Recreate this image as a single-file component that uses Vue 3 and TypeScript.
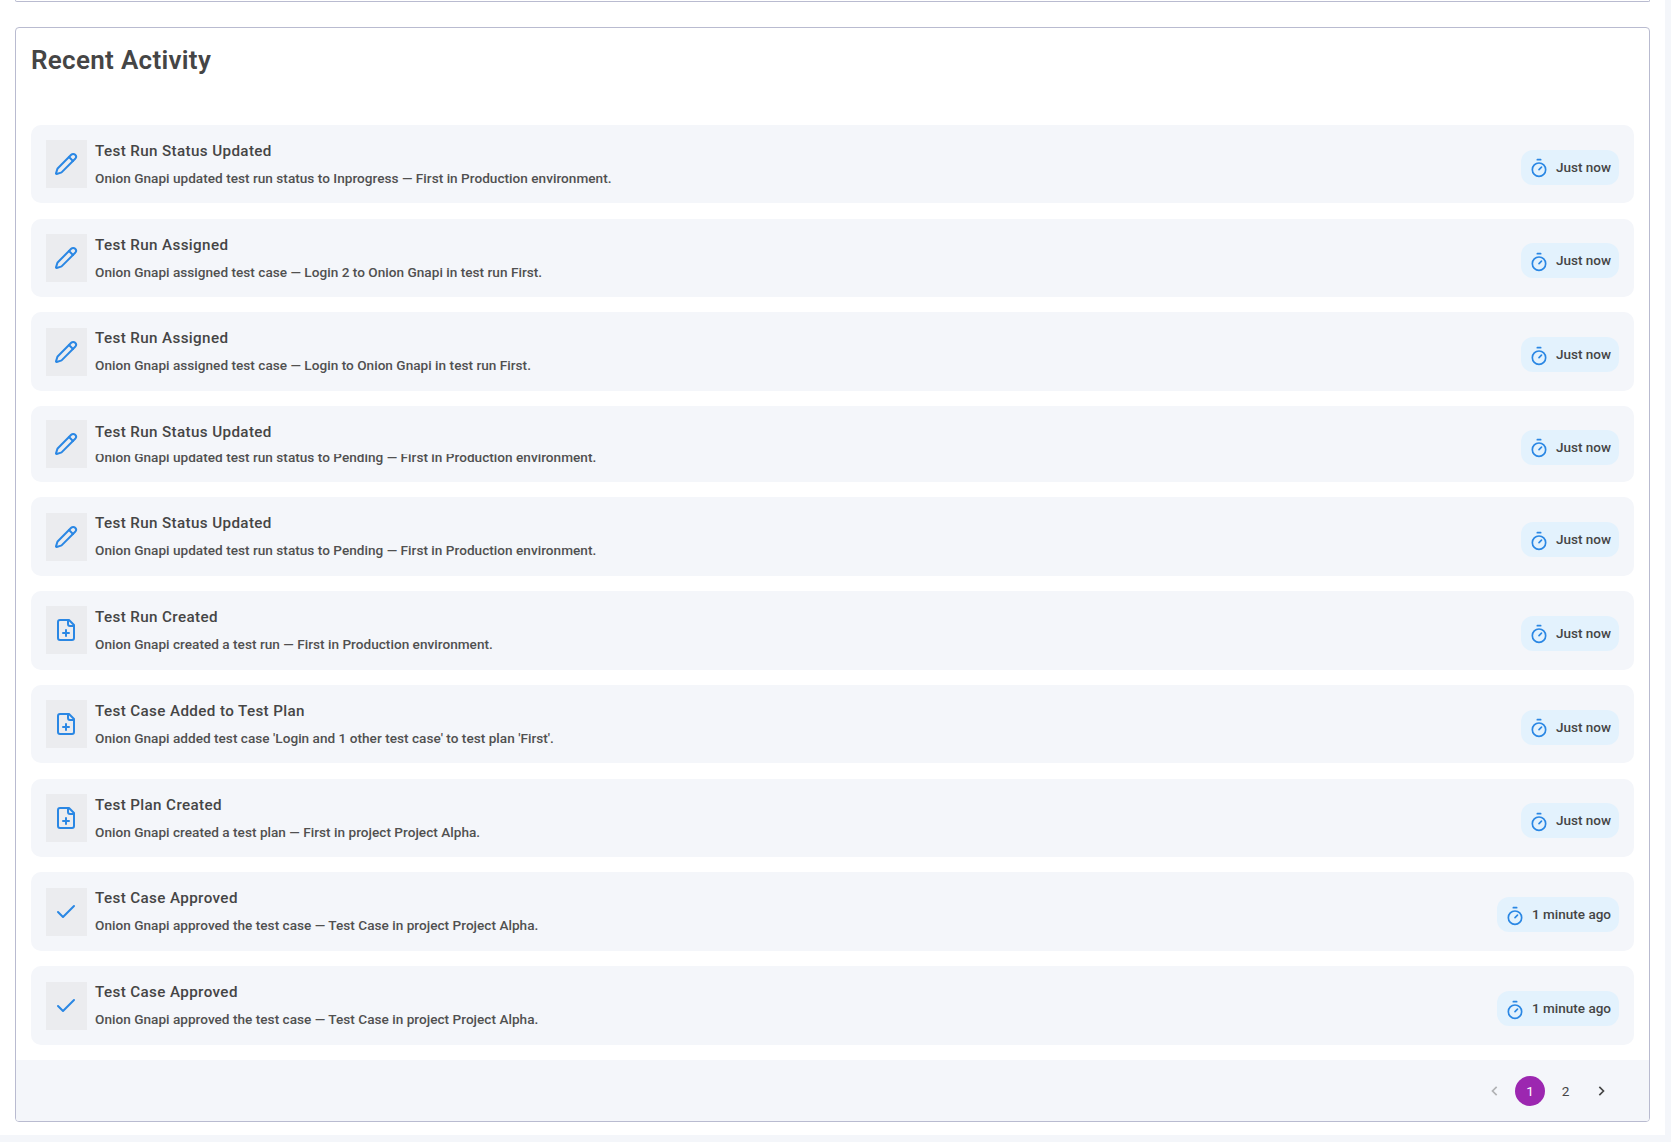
<script setup lang="ts">
type IconName = 'pencil' | 'file' | 'check'

interface Activity {
  title: string
  text: string
  time: string
  icon: IconName
  clipped?: boolean
}

const activities: Activity[] = [
  { title: 'Test Run Status Updated', text: 'Onion Gnapi updated test run status to Inprogress — First in Production environment.', time: 'Just now', icon: 'pencil' },
  { title: 'Test Run Assigned', text: 'Onion Gnapi assigned test case — Login 2 to Onion Gnapi in test run First.', time: 'Just now', icon: 'pencil' },
  { title: 'Test Run Assigned', text: 'Onion Gnapi assigned test case — Login to Onion Gnapi in test run First.', time: 'Just now', icon: 'pencil' },
  { title: 'Test Run Status Updated', text: 'Onion Gnapi updated test run status to Pending — First in Production environment.', time: 'Just now', icon: 'pencil', clipped: true },
  { title: 'Test Run Status Updated', text: 'Onion Gnapi updated test run status to Pending — First in Production environment.', time: 'Just now', icon: 'pencil' },
  { title: 'Test Run Created', text: 'Onion Gnapi created a test run — First in Production environment.', time: 'Just now', icon: 'file' },
  { title: 'Test Case Added to Test Plan', text: "Onion Gnapi added test case 'Login and 1 other test case' to test plan 'First'.", time: 'Just now', icon: 'file' },
  { title: 'Test Plan Created', text: 'Onion Gnapi created a test plan — First in project Project Alpha.', time: 'Just now', icon: 'file' },
  { title: 'Test Case Approved', text: 'Onion Gnapi approved the test case — Test Case in project Project Alpha.', time: '1 minute ago', icon: 'check' },
  { title: 'Test Case Approved', text: 'Onion Gnapi approved the test case — Test Case in project Project Alpha.', time: '1 minute ago', icon: 'check' },
]
</script>

<template>
  <div class="page">
    <div class="top-card"></div>
    <section class="card">
      <h2 class="card__title">Recent Activity</h2>
      <ul class="list">
        <li v-for="(item, i) in activities" :key="i" class="row" :class="{ 'row--clipped': item.clipped }">
          <div class="row__icon">
            <svg v-if="item.icon === 'pencil'" viewBox="0 0 24 24" class="glyph">
              <path d="M21.174 6.812a1 1 0 0 0-3.986-3.987L3.842 16.174a2 2 0 0 0-.5.83l-1.321 4.352a.5.5 0 0 0 .623.622l4.353-1.32a2 2 0 0 0 .83-.497z" />
              <path d="m15 5 4 4" />
            </svg>
            <svg v-else-if="item.icon === 'file'" viewBox="0 0 24 24" class="glyph">
              <path d="M15 2H6a2 2 0 0 0-2 2v16a2 2 0 0 0 2 2h12a2 2 0 0 0 2-2V7Z" />
              <path d="M14 2v4a2 2 0 0 0 2 2h4" />
              <path d="M9 15h6" />
              <path d="M12 18v-6" />
            </svg>
            <svg v-else viewBox="0 0 24 24" class="glyph">
              <path d="M20 6 9 17l-5-5" />
            </svg>
          </div>
          <div class="row__body">
            <div class="row__title">{{ item.title }}</div>
            <div class="row__text">{{ item.text }}</div>
          </div>
          <div class="badge">
            <svg viewBox="0 0 24 24" class="glyph badge__icon">
              <path d="M10 2h4" />
              <path d="m12 14 3-3" />
              <circle cx="12" cy="14" r="8" />
            </svg>
            <span class="badge__label">{{ item.time }}</span>
          </div>
        </li>
      </ul>
      <footer class="pager">
        <button type="button" class="pager__btn pager__btn--off">
          <svg viewBox="0 0 24 24" class="chev"><path d="m14 7-5 5 5 5" /></svg>
        </button>
        <button type="button" class="pager__btn pager__btn--on">1</button>
        <button type="button" class="pager__btn">2</button>
        <button type="button" class="pager__btn">
          <svg viewBox="0 0 24 24" class="chev"><path d="m10 7 5 5-5 5" /></svg>
        </button>
      </footer>
    </section>
  </div>
</template>

<style>
html,
body {
  margin: 0;
  background: #f4f6fa;
  overflow: hidden;
}
</style>

<style scoped>
.page {
  box-sizing: border-box;
  width: 1665px;
  height: 1135px;
  padding: 0 15px;
  background: #fff;
  font-family: Roboto, "Liberation Sans", sans-serif;
  color: #454545;
}

.top-card {
  height: 1px;
  border: 1px solid #b9bbd0;
  border-top: 0;
  border-radius: 0 0 4px 4px;
}

.card {
  box-sizing: border-box;
  height: 1095px;
  margin-top: 25px;
  border: 1px solid #b9bbd0;
  border-radius: 4px;
  display: flex;
  flex-direction: column;
  overflow: hidden;
}

.card__title {
  margin: 0;
  padding: 18px 15px 0;
  height: 80px;
  font-size: 26px;
  line-height: 28px;
  font-weight: 600;
  letter-spacing: 0.3px;
}

.list {
  list-style: none;
  margin: 0;
  padding: 0 15px;
  flex: 1;
}

.row {
  box-sizing: border-box;
  height: 78.6px;
  margin-bottom: 15.2px;
  padding: 15px;
  border-radius: 10px;
  background: #f4f6fa;
  display: flex;
  align-items: center;
}

.row--clipped {
  height: 76px;
}

.row__icon {
  flex: none;
  box-sizing: border-box;
  width: 41px;
  height: 48px;
  padding-right: 1px;
  background: #ebecef;
  display: flex;
  align-items: center;
  justify-content: center;
}

.glyph {
  width: 24px;
  height: 24px;
  fill: none;
  stroke: #2a87e4;
  stroke-width: 2;
  stroke-linecap: round;
  stroke-linejoin: round;
}

.row__body {
  flex: 1;
  min-width: 0;
  margin-left: 8px;
  align-self: flex-start;
}

.row__title {
  font-size: 15.2px;
  line-height: 24px;
  font-weight: 500;
  letter-spacing: 0.38px;
  margin-top: -1px;
}

.row__text {
  margin-top: 4px;
  font-size: 13.6px;
  line-height: 22px;
  font-weight: 500;
  letter-spacing: 0.02px;
  color: #505050;
  white-space: nowrap;
}

.row--clipped .row__text {
  margin-top: 10px;
  height: 12px;
  line-height: 7px;
  overflow: hidden;
}

.badge {
  flex: none;
  box-sizing: border-box;
  height: 35px;
  margin-top: 6px;
  padding: 0 8px;
  border-radius: 12px;
  background: #e3f2fd;
  display: flex;
  align-items: center;
  gap: 7px;
}

.badge__icon {
  width: 20px;
  height: 20px;
  margin-top: 2px;
}

.badge__label {
  font-size: 13.5px;
  font-weight: 500;
  margin-top: -1px;
}

.pager {
  flex: none;
  height: 61px;
  padding-right: 33px;
  background: #f4f6fa;
  display: flex;
  align-items: center;
  justify-content: flex-end;
  gap: 5.5px;
}

.pager__btn {
  width: 30px;
  height: 30px;
  padding: 0;
  border: 0;
  border-radius: 50%;
  background: transparent;
  color: #454545;
  font-family: inherit;
  font-size: 13.6px;
  display: flex;
  align-items: center;
  justify-content: center;
}

.pager__btn--on {
  background: #9c27b0;
  color: #fff;
}

.pager__btn--off {
  opacity: 0.38;
}

.chev {
  width: 20px;
  height: 20px;
  fill: none;
  stroke: #454545;
  stroke-width: 2;
}
</style>
